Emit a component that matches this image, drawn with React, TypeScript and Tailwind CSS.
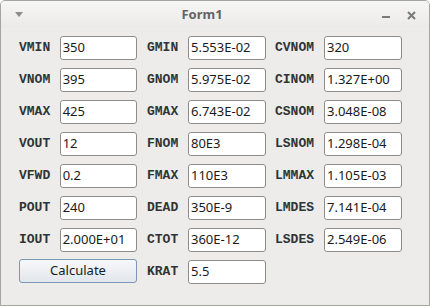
const col1: [string, string][] = [
  ["VMIN", "350"],
  ["VNOM", "395"],
  ["VMAX", "425"],
  ["VOUT", "12"],
  ["VFWD", "0.2"],
  ["POUT", "240"],
  ["IOUT", "2.000E+01"],
];

const col2: [string, string][] = [
  ["GMIN", "5.553E-02"],
  ["GNOM", "5.975E-02"],
  ["GMAX", "6.743E-02"],
  ["FNOM", "80E3"],
  ["FMAX", "110E3"],
  ["DEAD", "350E-9"],
  ["CTOT", "360E-12"],
  ["KRAT", "5.5"],
];

const col3: [string, string][] = [
  ["CVNOM", "320"],
  ["CINOM", "1.327E+00"],
  ["CSNOM", "3.048E-08"],
  ["LSNOM", "1.298E-04"],
  ["LMMAX", "1.105E-03"],
  ["LMDES", "7.141E-04"],
  ["LSDES", "2.549E-06"],
];

function Field({ label, value, labelW }: { label: string; value: string; labelW: string }) {
  return (
    <div className="flex h-6 items-center">
      <span
        className={`${labelW} font-['Liberation_Mono',monospace] text-[13px] font-bold text-[#2e3436]`}
      >
        {label}
      </span>
      <div className="flex h-6 w-[78px] items-center rounded-[3px] border border-[#8e8c88] bg-white pl-[2px] text-[13px] text-[#1a1a1a]">
        {value}
      </div>
    </div>
  );
}

export default function App() {
  return (
    <div className="h-[306px] w-[430px] font-['Noto_Sans',sans-serif]">
      <div className="flex h-full flex-col overflow-hidden rounded-t-[5px] border border-[#a5a39f] bg-[#edecea]">
        <div className="relative flex h-[27px] shrink-0 items-center justify-center bg-gradient-to-b from-[#f6f6f5] to-[#ebeae8] pr-[26px]">
          <svg className="absolute left-[13px] top-[10px]" width="10" height="7" viewBox="0 0 10 7">
            <path d="M1 1 L9 1 L5 6 Z" fill="#8b8b8b" />
          </svg>
          <span className="text-[13px] font-bold text-[#606468]">Form1</span>
          <div className="absolute left-[381px] top-[15px] h-[2px] w-[8px] bg-[#7a7a7a]" />
          <svg className="absolute left-[406px] top-[10px]" width="9" height="9" viewBox="0 0 9 9">
            <path d="M1 1 L8 8 M8 1 L1 8" stroke="#7a7a7a" strokeWidth="2" />
          </svg>
        </div>
        <div className="flex pl-[18px] pt-[8px]">
          <div className="flex w-[118px] flex-col gap-2">
            {col1.map(([l, v]) => (
              <Field key={l} label={l} value={v} labelW="w-[41px]" />
            ))}
            <button className="mt-[-1px] h-6 w-[118px] rounded-[3px] border border-[#7d97b8] bg-gradient-to-b from-[#f7f8fa] to-[#e2e6ec] text-[13px] text-[#1a1a1a]">
              Calculate
            </button>
          </div>
          <div className="ml-[10px] flex w-[119px] flex-col gap-2">
            {col2.map(([l, v]) => (
              <Field key={l} label={l} value={v} labelW="w-[41px]" />
            ))}
          </div>
          <div className="ml-[9px] flex w-[127px] flex-col gap-2">
            {col3.map(([l, v]) => (
              <Field key={l} label={l} value={v} labelW="w-[49px]" />
            ))}
          </div>
        </div>
      </div>
    </div>
  );
}
